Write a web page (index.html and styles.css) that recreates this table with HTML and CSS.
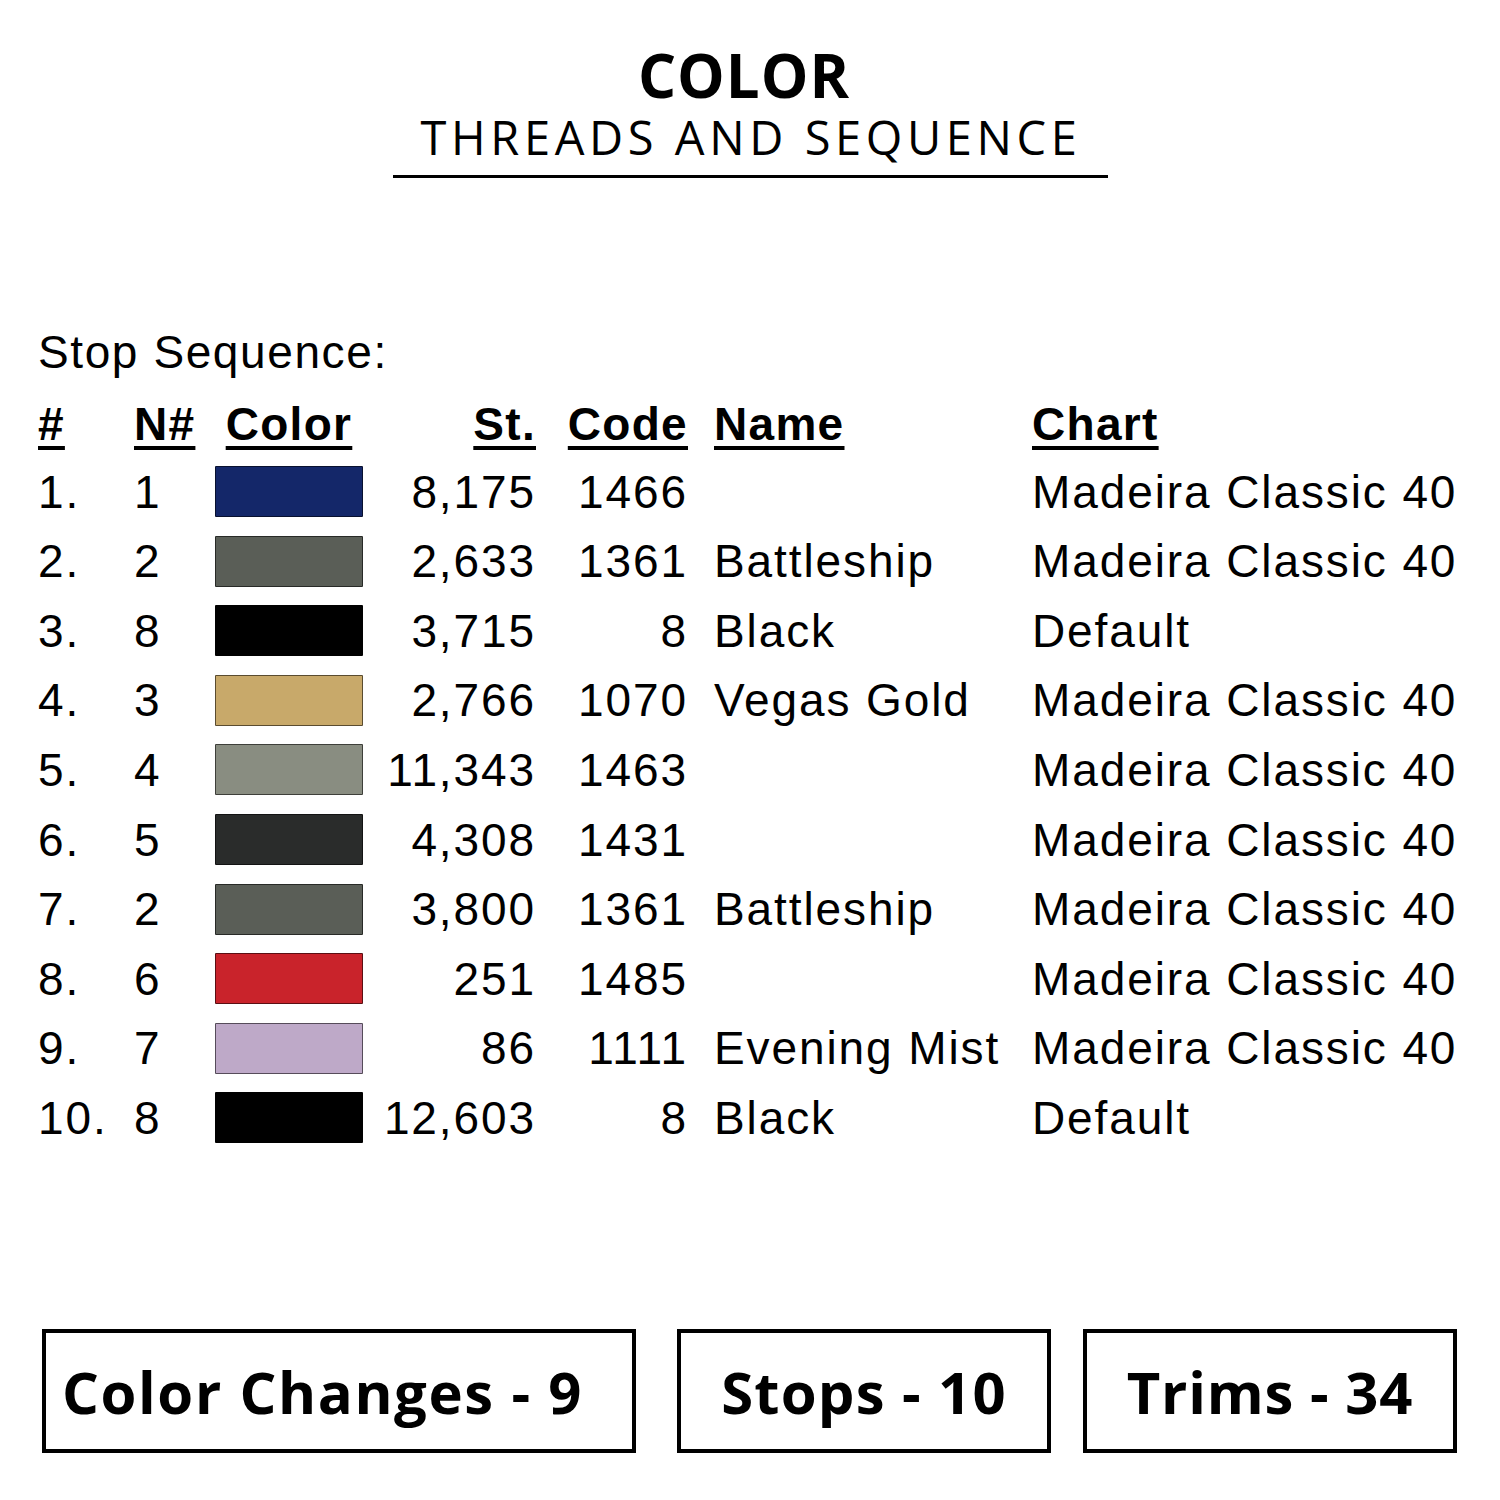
FILE: index.html
```html
<!DOCTYPE html>
<html>
<head>
<meta charset="utf-8">
<link rel="stylesheet" href="styles.css">
</head>
<body>
<div class="page">
  <header class="head">
    <h1 class="title">COLOR</h1>
    <div class="subtitle">THREADS AND SEQUENCE</div>
  </header>

  <section class="seq">
    <div class="seq-label">Stop Sequence:</div>
    <div class="grid">
      <div class="th">#</div>
      <div class="th">N#</div>
      <div class="th center">Color</div>
      <div class="th right">St.</div>
      <div class="th right">Code</div>
      <div class="th name">Name</div>
      <div class="th">Chart</div>

      <div>1.</div><div>1</div><div class="sw-cell"><span class="sw c-navy"></span></div><div class="right">8,175</div><div class="right">1466</div><div class="name"></div><div>Madeira Classic 40</div>
      <div>2.</div><div>2</div><div class="sw-cell"><span class="sw c-battle"></span></div><div class="right">2,633</div><div class="right">1361</div><div class="name">Battleship</div><div>Madeira Classic 40</div>
      <div>3.</div><div>8</div><div class="sw-cell"><span class="sw c-black"></span></div><div class="right">3,715</div><div class="right">8</div><div class="name">Black</div><div>Default</div>
      <div>4.</div><div>3</div><div class="sw-cell"><span class="sw c-gold"></span></div><div class="right">2,766</div><div class="right">1070</div><div class="name">Vegas Gold</div><div>Madeira Classic 40</div>
      <div>5.</div><div>4</div><div class="sw-cell"><span class="sw c-sage"></span></div><div class="right">11,343</div><div class="right">1463</div><div class="name"></div><div>Madeira Classic 40</div>
      <div>6.</div><div>5</div><div class="sw-cell"><span class="sw c-char"></span></div><div class="right">4,308</div><div class="right">1431</div><div class="name"></div><div>Madeira Classic 40</div>
      <div>7.</div><div>2</div><div class="sw-cell"><span class="sw c-battle"></span></div><div class="right">3,800</div><div class="right">1361</div><div class="name">Battleship</div><div>Madeira Classic 40</div>
      <div>8.</div><div>6</div><div class="sw-cell"><span class="sw c-red"></span></div><div class="right">251</div><div class="right">1485</div><div class="name"></div><div>Madeira Classic 40</div>
      <div>9.</div><div>7</div><div class="sw-cell"><span class="sw c-mist"></span></div><div class="right">86</div><div class="right">1111</div><div class="name">Evening Mist</div><div>Madeira Classic 40</div>
      <div>10.</div><div>8</div><div class="sw-cell"><span class="sw c-black"></span></div><div class="right">12,603</div><div class="right">8</div><div class="name">Black</div><div>Default</div>
    </div>
  </section>

  <footer class="stats">
    <div class="box box-1">Color Changes - 9</div>
    <div class="box box-2">Stops - 10</div>
    <div class="box box-3">Trims - 34</div>
  </footer>
</div>
</body>
</html>
```

FILE: styles.css
```css
html, body {
  margin: 0;
  padding: 0;
  background: #ffffff;
  color: #000000;
}

.page {
  width: 1500px;
  height: 1500px;
  position: relative;
  overflow: hidden;
}

.head {
  width: 715px;
  margin: 0 auto;
  padding-top: 42px;
  border-bottom: 3px solid #000;
  text-align: center;
  font-family: "Open Sans", "Noto Sans", sans-serif;
  box-sizing: border-box;
  height: 178px;
}

.title {
  margin: 0 0 0 -12px;
  font-size: 60px;
  line-height: 66px;
  font-weight: 700;
  letter-spacing: 1px;
}

.subtitle {
  font-size: 47px;
  line-height: 58px;
  font-weight: 400;
  letter-spacing: 4.6px;
  margin-left: 2px;
}

.seq {
  font-family: "Liberation Sans", Arial, sans-serif;
  font-size: 46px;
  letter-spacing: 1.9px;
  padding-left: 38px;
  margin-top: 144px;
}

.seq-label {
  line-height: 60px;
  letter-spacing: 1.6px;
  margin-bottom: 9px;
}

.grid {
  display: grid;
  grid-template-columns: 96px 81px 148px 173px 152px 344px auto;
  grid-template-rows: 66px repeat(10, 69.56px);
  align-items: center;
  white-space: nowrap;
}

.th {
  font-weight: 700;
  text-decoration: underline;
  text-decoration-thickness: 4px;
  text-underline-offset: 6px;
  letter-spacing: 1.3px;
}

.center { text-align: center; }
.right { text-align: right; }
.name { padding-left: 26px; }

.sw-cell {
  display: flex;
  align-items: center;
}

.sw {
  display: block;
  width: 149px;
  height: 51px;
  box-sizing: border-box;
  border: 1.5px solid rgba(0, 0, 0, 0.55);
  border-radius: 1px;
}

.c-navy { background: #142769; }
.c-battle { background: #5a5e57; }
.c-black { background: #000000; }
.c-gold { background: #c8a96a; }
.c-sage { background: #898d81; }
.c-char { background: #2a2c2b; }
.c-red { background: #c9232b; }
.c-mist { background: #bea9c8; }

.stats {
  position: absolute;
  left: 42px;
  top: 1329px;
  display: flex;
  font-family: "Open Sans", "Noto Sans", sans-serif;
  font-weight: 700;
}

.box {
  box-sizing: border-box;
  height: 124px;
  border: 4px solid #000;
  display: flex;
  align-items: center;
  justify-content: center;
  font-size: 58px;
  letter-spacing: 0.8px;
  white-space: nowrap;
}

.box-1 { width: 594px; justify-content: flex-start; padding-left: 16px; letter-spacing: 1.6px; }
.box-2 { width: 374px; margin-left: 41px; letter-spacing: 1.2px; }
.box-3 { width: 374px; margin-left: 32px; }
```
